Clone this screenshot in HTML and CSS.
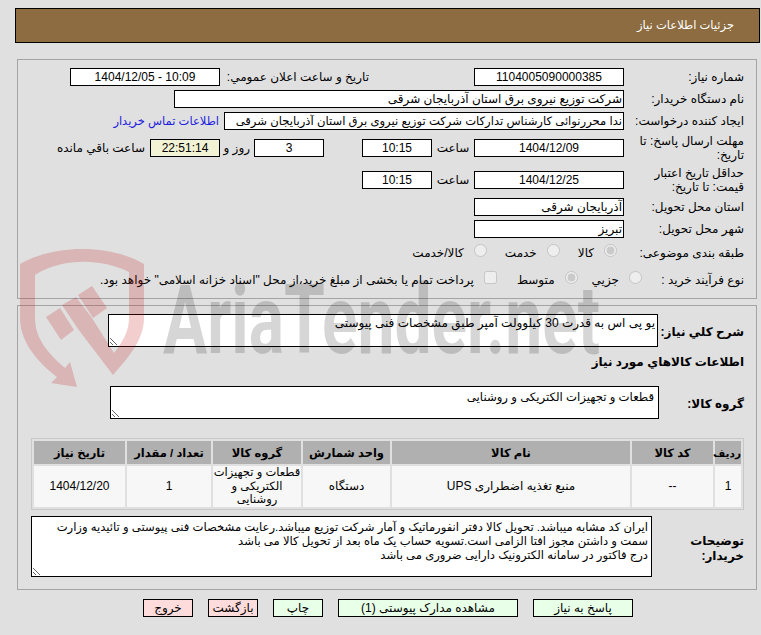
FILE: index.html
```html
<!DOCTYPE html>
<html lang="fa" dir="rtl">
<head>
<meta charset="utf-8">
<title>جزئیات اطلاعات نیاز</title>
<link rel="stylesheet" href="styles.css">
</head>
<body>
<svg class="watermark" width="761" height="635" viewBox="0 0 761 635" aria-hidden="true">
  <path class="wm-shield" d="M20 264C55 244 110 244 144 264V318C144 340 128 358 113 375L78 329L92 318L114 353C124 340 129 330 129 318V272C100 258 62 258 35 275V318C35 340 50 355 65 368L70 362L77 387L51 383L57 377C35 360 20 340 20 318Z"/>
  <path class="wm-shield" d="M46 317L60 308L74 330L61 340ZM62 305L76 297L92 318L78 329ZM78 295L92 286L107 308L93 318Z"/>
  <text class="wm-text" x="163" y="353" textLength="437" lengthAdjust="spacingAndGlyphs" direction="ltr">AriaTender.net</text>
</svg>

<header class="title-bar">جزئیات اطلاعات نیاز</header>

<section class="panel panel-top">
  <div class="row">
    <span class="label">شماره نیاز:</span>
    <span class="box w150">1104005090000385</span>
    <span class="label-inline announce">تاریخ و ساعت اعلان عمومي:</span>
    <span class="box w150">10:09 - 1404/12/05</span>
  </div>
  <div class="row">
    <span class="label">نام دستگاه خریدار:</span>
    <span class="box w450 start">شرکت توزیع نیروی برق استان آذربایجان شرقی</span>
  </div>
  <div class="row">
    <span class="label">ایجاد کننده درخواست:</span>
    <span class="box w400 start fit">ندا محررنوائی کارشناس تدارکات شرکت توزیع نیروی برق استان آذربایجان شرقی</span>
    <a class="contact" href="#">اطلاعات تماس خریدار</a>
  </div>
  <div class="row tall">
    <span class="label">مهلت ارسال پاسخ: تا تاریخ:</span>
    <span class="box w150">1404/12/09</span>
    <span class="label-inline hour">ساعت</span>
    <span class="box w70 gap-4">10:15</span>
    <span class="box w70 gap-38">3</span>
    <span class="label-inline days">روز و</span>
    <span class="box w70 gap-8 timer">22:51:14</span>
    <span class="label-inline gap-5">ساعت باقي مانده</span>
  </div>
  <div class="row tall">
    <span class="label">حداقل تاریخ اعتبار قیمت: تا تاریخ:</span>
    <span class="box w150">1404/12/25</span>
    <span class="label-inline hour">ساعت</span>
    <span class="box w70 gap-4">10:15</span>
  </div>
  <div class="row">
    <span class="label">استان محل تحویل:</span>
    <span class="box w150 start">آذربایجان شرقی</span>
  </div>
  <div class="row">
    <span class="label">شهر محل تحویل:</span>
    <span class="box w150 start">تبریز</span>
  </div>
  <div class="row options category">
    <span class="label">طبقه بندی موضوعی:</span>
    <label class="option"><input type="radio" name="cat" disabled checked>کالا</label>
    <label class="option"><input type="radio" name="cat" disabled>خدمت</label>
    <label class="option"><input type="radio" name="cat" disabled>کالا/خدمت</label>
  </div>
  <div class="row options process">
    <span class="label narrow">نوع فرآیند خرید :</span>
    <label class="option"><input type="radio" name="proc" disabled>جزیي</label>
    <label class="option"><input type="radio" name="proc" disabled checked>متوسط</label>
    <label class="option"><input type="checkbox" disabled>پرداخت تمام یا بخشی از مبلغ خرید،از محل "اسناد خزانه اسلامی" خواهد بود.</label>
  </div>
</section>

<section class="panel panel-bottom">
  <div class="field">
    <span class="label-strong">شرح کلي نیاز:</span>
    <textarea class="area area-desc" readonly>یو پی اس به قدرت 30 کیلوولت آمپر طبق مشخصات فنی پیوستی</textarea>
  </div>
  <h2 class="section-title">اطلاعات کالاهاي مورد نیاز</h2>
  <div class="field">
    <span class="label-strong group-label">گروه کالا:</span>
    <textarea class="area area-group" readonly>قطعات و تجهیزات الکتریکی و روشنایی</textarea>
  </div>
  <table class="items">
    <thead>
      <tr>
        <th class="c-row">ردیف</th>
        <th class="c-code">کد کالا</th>
        <th class="c-name">نام کالا</th>
        <th class="c-unit">واحد شمارش</th>
        <th class="c-group">گروه کالا</th>
        <th class="c-qty">تعداد / مقدار</th>
        <th class="c-date">تاریخ نیاز</th>
      </tr>
    </thead>
    <tbody>
      <tr>
        <td>1</td>
        <td>--</td>
        <td>منبع تغذیه اضطراری UPS</td>
        <td>دستگاه</td>
        <td class="cell-group">قطعات و تجهیزات<br>الکتریکی و<br>روشنایی</td>
        <td>1</td>
        <td>1404/12/20</td>
      </tr>
    </tbody>
  </table>
  <div class="field notes">
    <span class="label-strong">توضیحات خریدار:</span>
    <textarea class="area area-notes" readonly>ایران کد مشابه میباشد. تحویل کالا دفتر انفورماتیک و آمار شرکت توزیع میباشد.رعایت مشخصات فنی پیوستی و تائیدیه وزارت
سمت و داشتن مجوز افتا الزامی است.تسویه حساب یک ماه بعد از تحویل کالا می باشد
درج فاکتور در سامانه الکترونیک دارایی ضروری می باشد</textarea>
  </div>
</section>

<nav class="actions">
  <button class="btn go w100" type="button">پاسخ به نیاز</button>
  <button class="btn go w180" type="button">مشاهده مدارک پیوستی (1)</button>
  <button class="btn go w50" type="button">چاپ</button>
  <button class="btn stop w50" type="button">بازگشت</button>
  <button class="btn stop w50" type="button">خروج</button>
</nav>
</body>
</html>
```
FILE: styles.css
```css
* { box-sizing: border-box; }
html, body { height: 100%; }
body {
  margin: 0;
  padding: 8px 1px 0 15px;
  background: #e0e0e0;
  font-family: "Liberation Sans", "DejaVu Sans", sans-serif;
  font-size: 12px;
  color: #000;
  overflow: hidden;
}
.watermark {
  position: absolute;
  left: 0;
  top: 0;
  z-index: 5;
  pointer-events: none;
}
.wm-shield { fill: rgba(190, 10, 10, 0.2); }
.wm-text {
  font-family: Roboto, "Liberation Sans", sans-serif;
  font-weight: 700;
  font-size: 96px;
  fill: rgba(0, 0, 0, 0.16);
}

.title-bar {
  height: 35px;
  line-height: 33px;
  padding-right: 25px;
  background: #8c6c40;
  border: 1px solid #000;
  color: #fff;
  font-size: 11.5px;
}

.panel {
  margin: 16px 3px 0 2px;
  border: 1px solid #a4a4a4;
  padding: 8px 12px 0;
}
.panel-top { height: 240px; }
.panel-bottom { margin-top: 6px; height: 285px; }

.row { display: flex; align-items: center; height: 18px; margin-bottom: 4px; }
.row.tall { height: 28px; }
.row.options { height: 22px; }
.row.process { height: 24px; }

.label { flex: none; width: 114px; margin-left: 6px; line-height: 14px; }
.label.narrow { width: 102px; margin-left: 0; }
.label-inline { flex: none; white-space: nowrap; }
.announce { width: 144px; margin-right: 105px; margin-left: 5px; }
.hour { width: 34px; margin-right: 4px; text-align: center; }
.days { width: 22px; margin-right: 4px; text-align: center; }
.gap-4 { margin-right: 4px; }
.gap-38 { margin-right: 38px; }
.gap-8 { margin-right: 8px; }
.gap-5 { margin-right: 5px; }

.box {
  flex: none;
  height: 18px;
  line-height: 16px;
  border: 1px solid #000;
  background: #fff;
  text-align: center;
  white-space: nowrap;
  overflow: hidden;
}
.box.start { text-align: right; padding-right: 1px; }
.box.fit { font-size: 11.6px; }
.w150 { width: 150px; }
.w400 { width: 400px; }
.w450 { width: 450px; }
.w70 { width: 70px; }
.timer { background: #f2f2d4; }

.contact { color: #2020e0; font-size: 11.5px; text-decoration: none; margin-right: 5px; white-space: nowrap; }

.option { display: flex; align-items: center; flex: none; white-space: nowrap; }
.option input { width: 13px; height: 13px; margin: 0 0 6px 10px; flex: none; }
.category .option { margin-left: 18px; }
.category .label + .option { margin-right: 7px; }
.process .option { margin-left: 14px; }
.process .option + .option { margin-left: 20px; }
.process .option + .option + .option { margin-left: 0; }

.field { display: flex; align-items: center; }
.label-strong { flex: none; width: 86px; padding-top: 3px; font-weight: 700; }
.group-label { width: 85px; }
.area {
  display: block;
  flex: none;
  border: 1px solid #000;
  border-radius: 0;
  background: #fff;
  padding: 1px 2px;
  margin: 0;
  font: inherit;
  line-height: 14px;
  color: #000;
  outline: none;
  overflow: hidden;
}
.area-desc { width: 550px; height: 33px; }
.area-group { width: 549px; height: 33px; padding: 3px 4px; font-size: 11.7px; }
.section-title { margin: 7px 0 16px; font-size: 12px; line-height: 16px; font-weight: 700; }

.items {
  table-layout: fixed;
  width: 713px;
  margin: 19px 0 0;
  border: 1px solid #c8c8c8;
  border-collapse: separate;
  border-spacing: 2px;
}
.items th {
  height: 23px;
  padding: 0;
  background: #b0b0b0;
  font-size: 11.5px;
  font-weight: 700;
  white-space: nowrap;
}
.items th.c-row { font-size: 10.5px; }
.items td {
  height: 41px;
  padding: 0;
  background: #f7f7f7;
  text-align: center;
  line-height: 13.5px;
  font-size: 12px;
}
.items td.cell-group { font-size: 11.5px; white-space: nowrap; }
.c-row { width: 26px; }
.c-code { width: 81px; }
.c-name { width: 238px; }
.c-unit { width: 87px; }
.c-group { width: 88px; }
.c-qty { width: 84px; }
.c-date { width: 91px; }

.notes { margin-top: 6px; }
.notes .label-strong { width: 92px; padding-top: 4px; line-height: 15px; }
.area-notes { width: 621px; height: 61px; padding: 3px 3px 3px 2px; white-space: pre; font-size: 11.6px; }

.actions { display: flex; gap: 15px; margin: 9px 127px 0 0; }
.btn {
  height: 18px;
  padding: 0;
  border: 1px solid #000;
  border-radius: 0;
  font: inherit;
  line-height: 14px;
  color: #000;
}
.go { background: #e8ffe8; }
.stop { background: #ffdcdc; }
.w100 { width: 100px; }
.w180 { width: 180px; }
.w50 { width: 50px; }
```
